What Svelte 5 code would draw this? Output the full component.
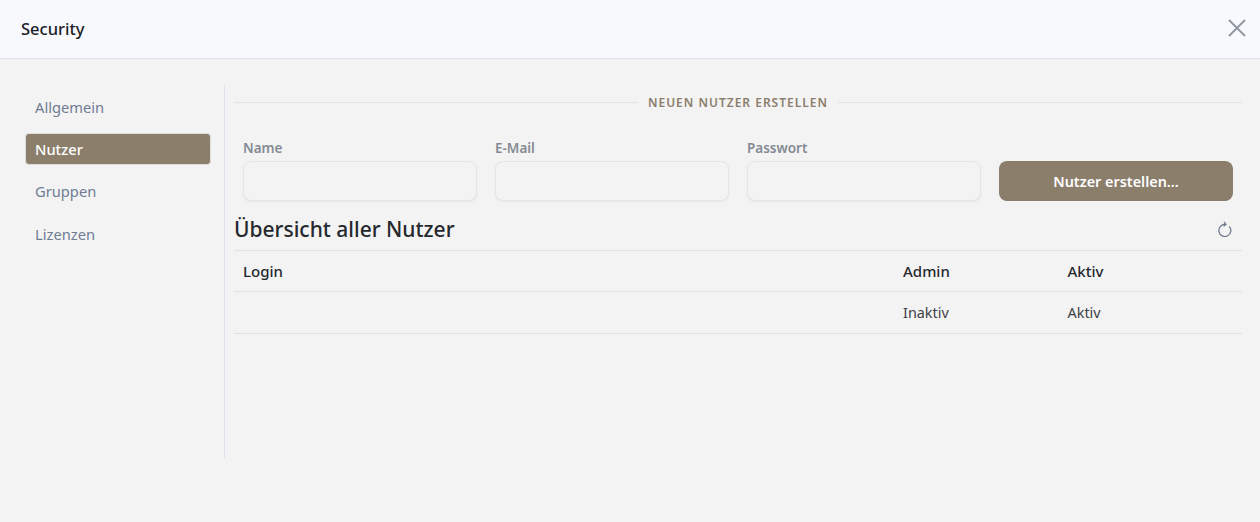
<script lang="ts">
	const navItems = ['Allgemein', 'Nutzer', 'Gruppen', 'Lizenzen'];
	const fields = ['Name', 'E-Mail', 'Passwort'];
	let active = 'Nutzer';
</script>

<div class="dialog">
	<header class="top">
		<h1>Security</h1>
		<button class="close" aria-label="Schließen">
			<svg width="18" height="18" viewBox="0 0 18 18" fill="none" stroke="currentColor" stroke-width="1.8">
				<path d="M1 1 17 17M17 1 1 17" />
			</svg>
		</button>
	</header>

	<div class="body">
		<nav class="side">
			{#each navItems as item}
				<div class="nav-item" class:active={item === active}>{item}</div>
			{/each}
		</nav>

		<main class="content">
			<div class="divider"><span>NEUEN NUTZER ERSTELLEN</span></div>

			<div class="form">
				{#each fields as field}
					<div class="field">
						<span class="field-label">{field}</span>
						<div class="input"></div>
					</div>
				{/each}
				<button class="submit">Nutzer erstellen...</button>
			</div>

			<div class="heading">
				<h2>Übersicht aller Nutzer</h2>
				<svg class="refresh" width="14" height="16" viewBox="0 0 14 16" fill="none" stroke="currentColor" stroke-width="1.2">
					<path d="M11.2 5.3A6 6 0 1 1 7.5 3.5" />
					<path d="M6 1 8 3.4 5.6 5.4" />
				</svg>
			</div>

			<div class="row head">
				<div class="c-login">Login</div>
				<div class="c-admin">Admin</div>
				<div class="c-active">Aktiv</div>
			</div>
			<div class="row body-row">
				<div class="c-login"></div>
				<div class="c-admin">Inaktiv</div>
				<div class="c-active">Aktiv</div>
			</div>
		</main>
	</div>
</div>

<style>
	:global(body) {
		margin: 0;
		background: #f3f3f3;
	}

	.dialog {
		height: 522px;
		display: flex;
		flex-direction: column;
		font-family: 'Noto Sans', 'Open Sans', sans-serif;
		font-size: 14px;
		color: #25282d;
		overflow: hidden;
	}

	.top {
		height: 56px;
		flex: none;
		display: flex;
		align-items: center;
		justify-content: space-between;
		padding: 0 14px 2px 21px;
		background: #f7f9fd;
		border-bottom: 1px solid #dfe2ea;
	}

	h1 {
		margin: 0;
		font-size: 16.5px;
		font-weight: 500;
		color: #1c2026;
	}

	.close {
		padding: 0;
		border: 0;
		background: none;
		color: #8f969f;
		display: flex;
	}

	.body {
		display: flex;
		padding-top: 26px;
	}

	.side {
		width: 225px;
		height: 373px;
		box-sizing: border-box;
		padding: 5.7px 13px 0 25px;
		border-right: 1px solid #dce2ec;
		display: flex;
		flex-direction: column;
		gap: 10.4px;
	}

	.nav-item {
		height: 32px;
		flex: none;
		display: flex;
		align-items: center;
		padding-left: 9px;
		box-sizing: border-box;
		border: 1px solid transparent;
		color: #6f7c93;
		font-size: 14.7px;
		border-radius: 4px;
	}

	.nav-item.active {
		background: #8b7e6b;
		border-color: #dcdcdc;
		color: #fff;
		font-weight: 500;
	}

	.content {
		width: 1008px;
		margin-left: 9px;
		display: flex;
		flex-direction: column;
	}

	.divider {
		display: flex;
		align-items: center;
		gap: 10px;
		height: 35px;
		margin-bottom: 18px;
	}

	.divider::before,
	.divider::after {
		content: '';
		flex: 1;
		height: 1px;
		background: #dfe3ea;
	}

	.divider span {
		font-size: 12px;
		font-weight: 600;
		letter-spacing: 1px;
		color: #8b7e6b;
	}

	.form {
		display: grid;
		grid-template-columns: repeat(4, 234px);
		column-gap: 18px;
		padding: 0 9px;
		align-items: end;
	}

	.field-label {
		display: block;
		height: 23px;
		line-height: 20px;
		font-size: 13.5px;
		font-weight: 600;
		color: #858b94;
	}

	.input {
		height: 40px;
		box-sizing: border-box;
		border: 1px solid #e2e5ea;
		border-radius: 8px;
		background: #f3f3f4;
		box-shadow: 0 1px 2px rgba(0, 0, 0, 0.05);
	}

	.submit {
		height: 40px;
		border: 0;
		border-radius: 8px;
		background: #8b7e6b;
		color: #fff;
		font: inherit;
		font-size: 14.4px;
		font-weight: 600;
	}

	.heading {
		height: 42px;
		padding-top: 7px;
		display: flex;
		align-items: center;
		justify-content: space-between;
		padding-right: 10px;
		border-bottom: 1px solid #dfe3ea;
	}

	h2 {
		margin: 0;
		font-size: 21px;
		font-weight: 500;
		color: #25282d;
	}

	.refresh {
		color: #6a7588;
	}

	.row {
		height: 40px;
		display: flex;
		align-items: center;
		padding: 0 9px;
		font-size: 14.4px;
		border-bottom: 1px solid #e0e2e6;
	}

	.row.head {
		font-size: 15px;
		font-weight: 500;
	}

	.row.body-row {
		height: 41px;
		color: #3d4045;
	}

	.c-login {
		width: 660px;
	}

	.c-admin {
		width: 164.5px;
	}
</style>
